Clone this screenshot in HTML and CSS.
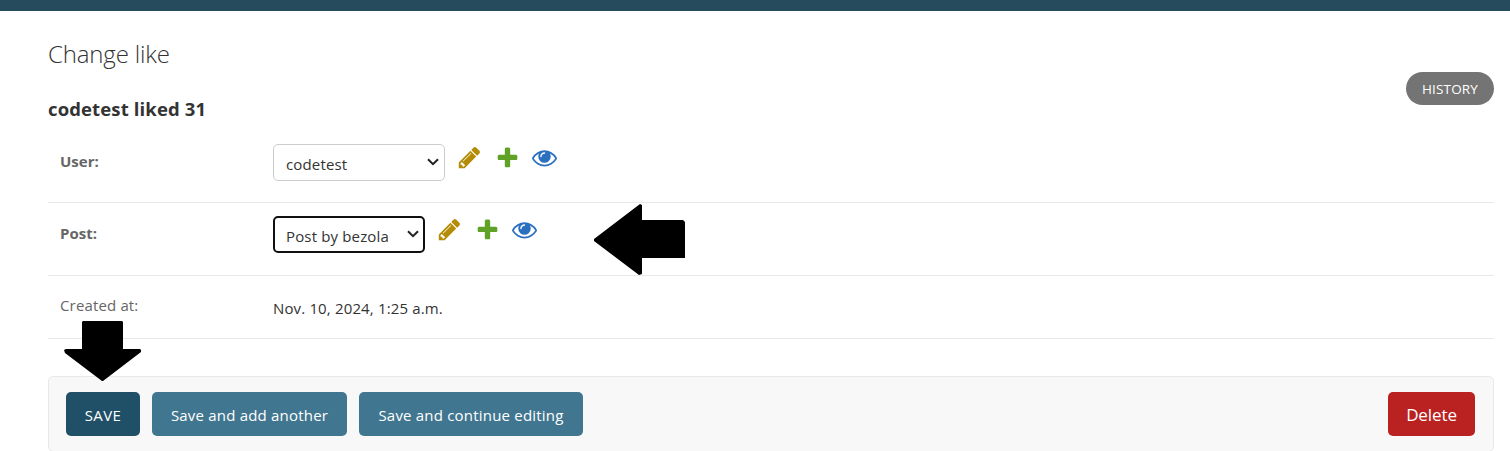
FILE: index.html
```html
<!DOCTYPE html>
<html lang="en">
<head>
<meta charset="utf-8">
<title>Change like</title>
<link rel="stylesheet" href="styles.css">
</head>
<body>
<svg class="sprite" aria-hidden="true">
  <symbol id="pencil" viewBox="0 0 1792 1792"><path fill="#b48c08" d="M491 1536l91-91-235-235-91 91v107h128v128h107zm523-928q0-22-22-22-10 0-17 7l-542 542q-7 7-7 17 0 22 22 22 10 0 17-7l542-542q7-7 7-17zm-54-192l416 416-832 832h-416v-416zm683 96q0 53-37 90l-166 166-416-416 166-165q36-38 90-38 53 0 91 38l235 234q37 39 37 91z"/></symbol>
  <symbol id="plus" viewBox="0 0 1792 1792"><path fill="#5fa225" d="M1600 796v192q0 40-28 68t-68 28h-416v416q0 40-28 68t-68 28h-192q-40 0-68-28t-28-68v-416h-416q-40 0-68-28t-28-68v-192q0-40 28-68t68-28h416v-416q0-40 28-68t68-28h192q40 0 68 28t28 68v416h416q40 0 68 28t28 68z"/></symbol>
  <symbol id="eye" viewBox="0 0 1792 1792"><path fill="#2b70bf" d="M1664 960q-152-236-381-353 61 104 61 225 0 185-131.5 316.5t-316.5 131.5-316.5-131.5-131.5-316.5q0-121 61-225-229 117-381 353 133 205 333.5 326.5t434.5 121.5 434.5-121.5 333.5-326.5zm-720-384q0-20-14-34t-34-14q-125 0-214.5 89.5t-89.5 214.5q0 20 14 34t34 14 34-14 14-34q0-86 61-147t147-61q20 0 34-14t14-34zm848 384q0 34-20 69-140 230-376.5 368.5t-499.5 138.5-499.5-139-376.5-368q-20-35-20-69t20-69q140-229 376.5-368t499.5-139 499.5 139 376.5 368q20 35 20 69z"/></symbol>
</svg>
<div class="topbar"></div>
<main class="content">
  <header class="heading">
    <div>
      <h1>Change like</h1>
      <h2>codetest liked 31</h2>
    </div>
    <a class="history">HISTORY</a>
  </header>
  <form>
    <div class="row row-user">
      <label class="required">User:</label>
      <div class="select"><span>codetest</span><svg class="chevron" viewBox="0 0 12 8"><path d="M1 1.2l5 5 5-5"/></svg></div>
      <div class="links"><svg><use href="#pencil"/></svg><svg><use href="#plus"/></svg><svg><use href="#eye"/></svg></div>
    </div>
    <div class="row row-post">
      <label class="required">Post:</label>
      <div class="select focused"><span>Post by bezola</span><svg class="chevron" viewBox="0 0 12 8"><path d="M1 1.2l5 5 5-5"/></svg></div>
      <div class="links"><svg><use href="#pencil"/></svg><svg><use href="#plus"/></svg><svg><use href="#eye"/></svg></div>
    </div>
    <div class="row row-created">
      <label>Created at:</label>
      <div class="readonly">Nov. 10, 2024, 1:25 a.m.</div>
    </div>
    <div class="submit-row">
      <a class="button save">SAVE</a>
      <a class="button another">Save and add another</a>
      <a class="button continue">Save and continue editing</a>
      <a class="button delete">Delete</a>
    </div>
  </form>
</main>
<svg class="arrow arrow-left" viewBox="0 0 92 72"><path d="M0 36L46 1L48 2V17H89L91 19V55H48V71L45 72L0 38Z"/></svg>
<svg class="arrow arrow-down" viewBox="0 0 78 62"><path d="M19 1H58L59 2V29H76L77 30V32L39 61H38L1 33L0 30L2 29H18V2Z"/></svg>
</body>
</html>
```
FILE: styles.css
```css
* { box-sizing: border-box; }
body {
  margin: 0;
  height: 451px;
  overflow: hidden;
  background: #fff;
  color: #333;
  font: 15px/20px "Open Sans", "Noto Sans", sans-serif;
  letter-spacing: 0.15px;
  white-space: nowrap;
}
.sprite { display: none; }
.topbar { height: 11px; background: #264b5d; }
.content { padding: 0 16px 0 48px; }
.heading { display: flex; justify-content: space-between; height: 119px; }
h1 { margin: 27px 0 0; font-size: 24px; line-height: 32px; font-weight: 300; letter-spacing: -0.15px; }
h2 { margin: 26px 0 0; font-size: 18.5px; line-height: 26px; font-weight: 700; letter-spacing: 0.13px; }
.history {
  width: 88px; height: 33px; margin-top: 61px; border-radius: 17px;
  background: #747474; color: #fff;
  font-size: 13.5px; line-height: 34px; text-align: center;
}
.row { display: flex; align-items: flex-start; padding: 14px 12px 0; border-bottom: 1px solid #e8e8e8; }
.row-user { height: 73px; }
.row-post { height: 73px; padding-top: 13px; }
.row-created { height: 63px; }
label { width: 213px; padding-top: 7px; color: #666; }
.row-created label { padding-top: 5px; }
.required { font-weight: 700; letter-spacing: 0; }
.select {
  display: flex; align-items: center; justify-content: space-between;
  width: 172px; height: 37px; padding: 3px 5px 0 12px;
  border: 1px solid #ccc; border-radius: 5px;
}
.focused { width: 152px; padding: 3px 4px 0 11px; border: 2px solid #101010; }
.chevron { width: 12px; height: 8px; margin-top: -4px; fill: none; stroke: #222; stroke-width: 2; }
.links { display: flex; gap: 12.5px; margin: 1px 0 0 12px; }
.links svg { width: 25px; height: 25px; }
.readonly { padding-top: 8px; }
.submit-row {
  display: flex; gap: 12px; height: 76px; margin-top: 37px; padding: 15px 18px 0 17px;
  border: 1px solid #e8e8e8; border-radius: 5px; background: #f8f8f8;
}
.button { height: 44px; border-radius: 5px; background: #417690; color: #fff; line-height: 46px; text-align: center; letter-spacing: 0.2px; }
.save { width: 74px; background: #205067; letter-spacing: 0.4px; }
.another { width: 195px; }
.continue { width: 224px; }
.delete { width: 87px; margin-left: auto; background: #ba2121; font-size: 17px; letter-spacing: -0.1px; }
.arrow { position: absolute; fill: #000; }
.arrow-left { left: 594px; top: 203px; width: 92px; height: 72px; }
.arrow-down { left: 64px; top: 320px; width: 78px; height: 62px; }
```
